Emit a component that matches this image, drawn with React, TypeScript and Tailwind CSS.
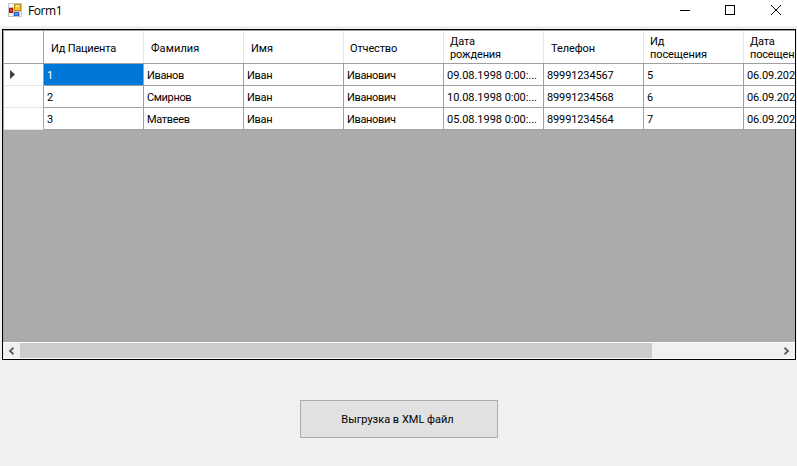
const columns = [
  { title: 'Ид Пациента', track: 'tracking-[-0.22px]', cell: '' },
  { title: 'Фамилия', track: 'tracking-[0.1px]', cell: 'tracking-[-0.35px]' },
  { title: 'Имя', track: '', cell: 'tracking-[-0.3px]' },
  { title: 'Отчество', track: 'tracking-[-0.15px] -ml-px', cell: 'tracking-[-0.35px]' },
  { title: 'Дата\nрождения', track: 'tracking-[-0.12px] -ml-px', cell: 'tracking-[-0.03px]' },
  { title: 'Телефон', track: 'tracking-[-0.1px]', cell: 'tracking-[-0.12px]' },
  { title: 'Ид\nпосещения', track: 'tracking-[-0.12px] -ml-px', cell: '' },
  { title: 'Дата\nпосещен', track: 'tracking-[-0.18px] -ml-px', cell: 'tracking-[-0.12px]' },
];

const rows = [
  ['1', 'Иванов', 'Иван', 'Иванович', '09.08.1998 0:00:...', '89991234567', '5', '06.09.202'],
  ['2', 'Смирнов', 'Иван', 'Иванович', '10.08.1998 0:00:...', '89991234568', '6', '06.09.202'],
  ['3', 'Матвеев', 'Иван', 'Иванович', '05.08.1998 0:00:...', '89991234564', '7', '06.09.202'],
];

function FormIcon() {
  return (
    <svg width="14" height="14" viewBox="0 0 14 14" className="shrink-0" shapeRendering="crispEdges">
      <rect width="14" height="14" fill="#c4c4c4" />
      <rect x="1" y="1" width="5" height="3" fill="#f4f4f4" />
      <rect x="1" y="10" width="4" height="3" fill="#f4f4f4" />
      <rect x="12" y="9" width="1" height="4" fill="#f4f4f4" />
      <rect x="1" y="5" width="4" height="5" fill="#a81d12" />
      <rect x="2" y="6" width="2" height="3" fill="#d83a26" />
      <rect x="6" y="1" width="7" height="7" fill="#c18a12" />
      <rect x="7" y="2" width="5" height="5" fill="#f7c832" />
      <rect x="8" y="2" width="3" height="2" fill="#fde58a" />
      <rect x="6" y="9" width="5" height="4" fill="#2c62c4" />
      <rect x="7" y="10" width="3" height="2" fill="#5d94ee" />
    </svg>
  );
}

function TitleBar() {
  return (
    <header className="flex h-[26px] shrink-0 items-start bg-white pl-2">
      <div className="pt-[3px]"><FormIcon /></div>
      <span className="ml-1.5 pt-[2px] font-['Open_Sans',sans-serif] text-[12px] leading-[17px] tracking-[-0.4px]">Form1</span>
      <svg width="117" height="20" viewBox="0 0 117 20" className="ml-auto" fill="none" stroke="#000">
        <path d="M0 10.5h10M45.5 5.5h9v9h-9z" shapeRendering="crispEdges" />
        <path d="M91 5l10 10M101 5l-10 10" strokeWidth="0.95" />
      </svg>
    </header>
  );
}

function ScrollBar() {
  return (
    <div className="flex h-[17px] shrink-0 border-y border-white bg-[#f0f0f0]">
      <div className="flex w-[17px] items-center justify-center pr-px">
        <svg width="7" height="8" viewBox="0 0 7 8" fill="none" stroke="#606060" strokeWidth="1.9"><path d="M5.5 .7L2 4l3.500 3.300" /></svg>
      </div>
      <div className="w-[632px] bg-[#cdcdcd]" />
      <div className="ml-auto flex w-[17px] items-center justify-center">
        <svg width="7" height="8" viewBox="0 0 7 8" fill="none" stroke="#606060" strokeWidth="1.9"><path d="M1.500 .7L5 4 1.500 7.300" /></svg>
      </div>
    </div>
  );
}

function DataGrid() {
  return (
    <div className="ml-[2px] mt-[3px] flex h-[331px] w-[794px] flex-col border border-black bg-[#ababab]">
      <div className="min-h-0 flex-1 overflow-hidden border-l border-t border-[#a0a0a0]">
        <div className="flex h-[33px] w-[840px] border-b border-[#a0a0a0] bg-white">
          <div className="w-10 shrink-0 border-r border-[#a0a0a0]" />
          {columns.map((c) => (
            <div key={c.title} className={`flex w-[100px] shrink-0 items-center whitespace-pre-line border-r border-[#e5e5e5] pl-[7px] leading-[13px] ${c.title.includes('\n') ? 'pt-px' : 'pt-[3px]'}`}>
              <span className={c.track}>{c.title}</span>
            </div>
          ))}
        </div>
        {rows.map((row, r) => (
          <div key={r} className="flex h-[22px] w-[840px] bg-white">
            <div className="flex w-10 shrink-0 items-center border-b border-r border-b-[#e5e5e5] border-r-[#a0a0a0] pl-1.5">
              {r === 0 && <svg width="5" height="9" viewBox="0 0 5 9" fill="#404040"><path d="M0 0l5 4.500L0 9z" /></svg>}
            </div>
            {row.map((value, i) => (
              <div
                key={i}
                className={`w-[100px] shrink-0 whitespace-nowrap border-b border-r border-[#a0a0a0] pl-[3px] pt-px leading-[21px] ${columns[i].cell} ${r === 0 && i === 0 ? 'bg-[#0078d7] text-white' : ''}`}
              >
                {value}
              </div>
            ))}
          </div>
        ))}
      </div>
      <ScrollBar />
    </div>
  );
}

export default function App() {
  return (
    <div className="flex h-[466px] w-[797px] flex-col overflow-hidden bg-[#f0f0f0] font-[Roboto,sans-serif] text-[11px] text-black">
      <TitleBar />
      <DataGrid />
      <button className="ml-[300px] mt-10 h-[38px] w-[198px] border border-[#adadad] bg-[#e1e1e1] pr-[3px] pt-0.5">
        Выгрузка в XML файл
      </button>
    </div>
  );
}
